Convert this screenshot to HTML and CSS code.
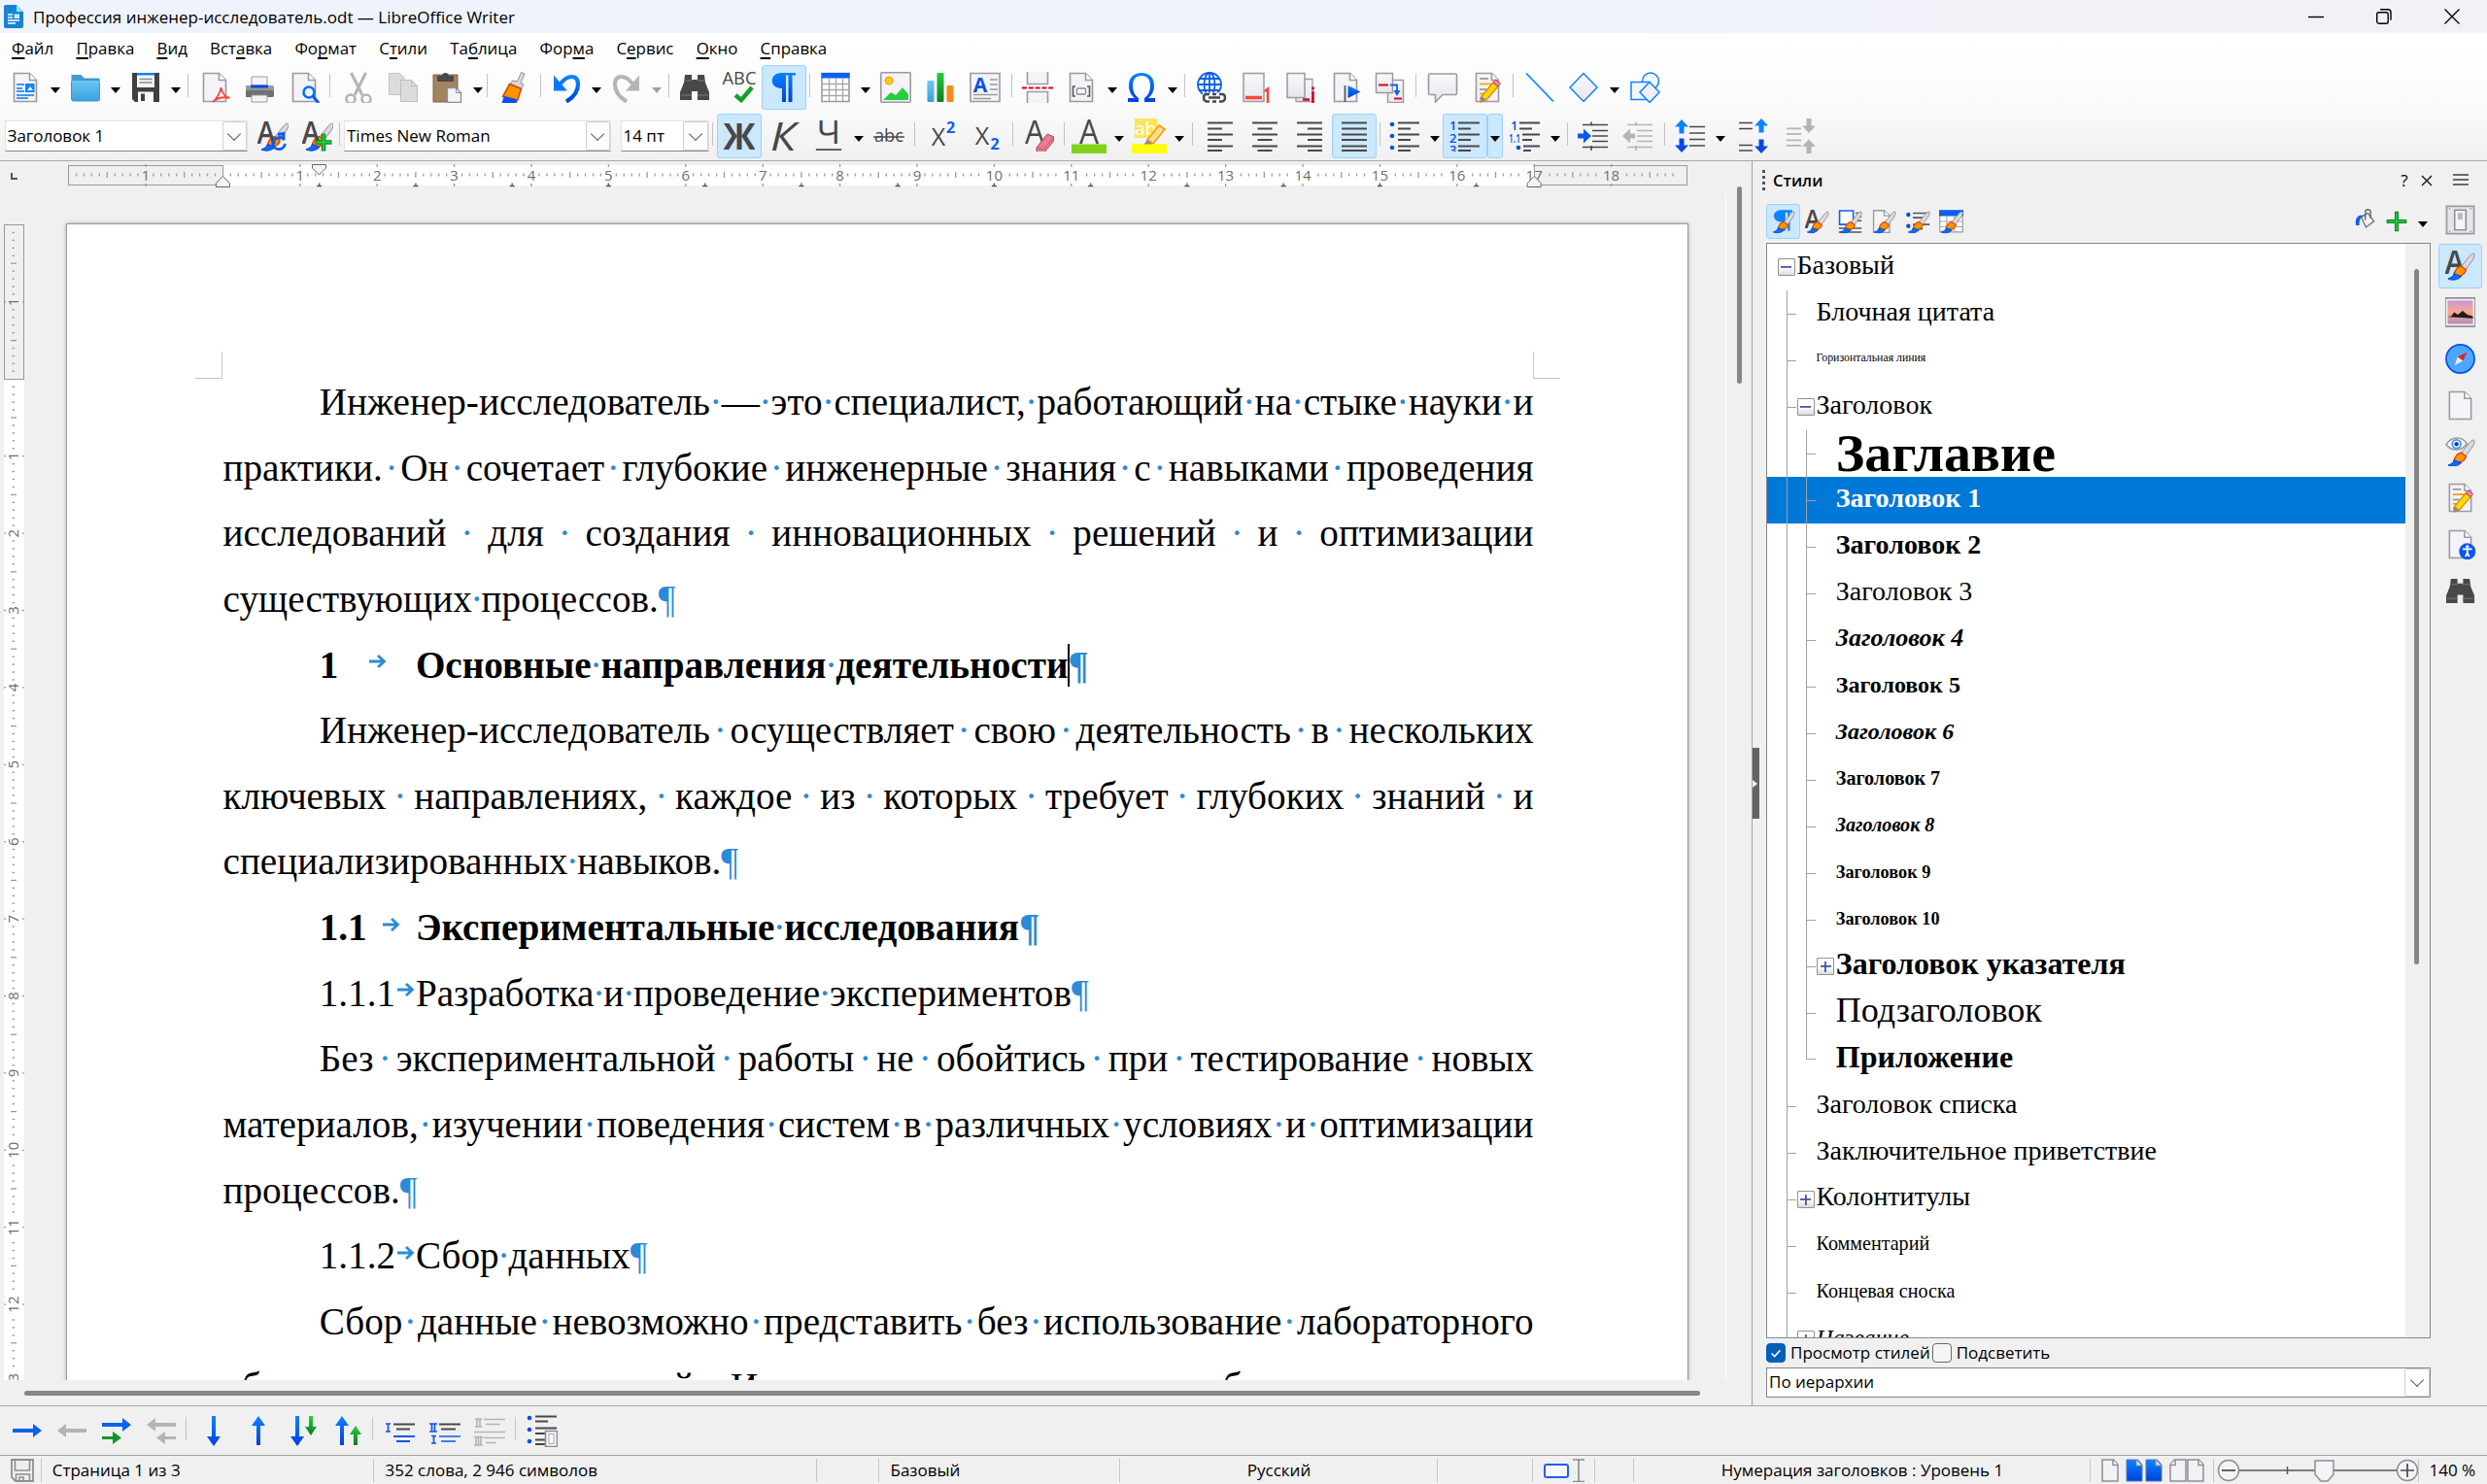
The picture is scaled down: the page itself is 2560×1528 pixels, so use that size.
FILE: index.html
```html
<!DOCTYPE html>
<html lang="ru">
<head>
<meta charset="utf-8">
<title>Профессия инженер-исследователь.odt — LibreOffice Writer</title>
<link rel="stylesheet" href="styles.css">
</head>
<body>
<svg class="defs" aria-hidden="true">
  <defs>
    <linearGradient id="blue" x1="0" y1="0" x2="0" y2="1"><stop offset="0" stop-color="#0a84ff"/><stop offset="1" stop-color="#0040dd"/></linearGradient>
    <linearGradient id="green" x1="0" y1="0" x2="0" y2="1"><stop offset="0" stop-color="#28cd41"/><stop offset="1" stop-color="#0a7d1c"/></linearGradient>
    <linearGradient id="sky" x1="0" y1="0" x2="0" y2="1"><stop offset="0" stop-color="#6cc8f5"/><stop offset="1" stop-color="#3aa0dc"/></linearGradient>
    <linearGradient id="paper" x1="0" y1="0" x2="0" y2="1"><stop offset="0" stop-color="#f8f7fc"/><stop offset="1" stop-color="#e8e8ec"/></linearGradient>
    <linearGradient id="dusk" x1="0" y1="0" x2="0" y2="1"><stop offset="0" stop-color="#c79ad2"/><stop offset=".5" stop-color="#fba98c"/><stop offset="1" stop-color="#b48cc0"/></linearGradient>
  </defs>
</svg>
<svg class="symbols" aria-hidden="true">
  <symbol id="doc" viewBox="0 0 32 32"><path d="M4.5 1.5h16l7 7v22h-23z" fill="#f4f3f8" stroke="#9a9a9f" stroke-width="1.6"/><path d="M20.500 1.500v7h7" fill="#fff" stroke="#9a9a9f" stroke-width="1.600"/></symbol>
  <symbol id="brush" viewBox="0 0 32 32"><path d="M30.500 3.500c1 1 .5 3-1 6l-8 11-4.500-3.500 8-10c2-2.500 4-4.500 5.500-3.500z" fill="#d9d9de" stroke="#88888c"/><path d="M17 16.500c-5 1-7 5-8 10h8c4-2 5-4 5-6z" fill="#ff9500" stroke="#d8480a" stroke-width="1.500"/><path d="M9.500 24.500c-1 3-3 4-6.500 5.500 4 2 10 1.500 14-2.500z" fill="#0a6cff" stroke="#0040c8"/></symbol>
  <symbol id="pencil" viewBox="0 0 32 32"><path d="M9 31l1-6L22 11l5 4-12 14z" fill="#ffd60a" stroke="#e08700" stroke-width="1.300"/><path d="M9 31l1-6 5 4z" fill="#8a8a8e"/><path d="M22 11l2.500-3 5 4-2.500 3z" fill="#f08ca0" stroke="#b8405c"/></symbol>
  <symbol id="i-new" viewBox="0 0 32 32"><use href="#doc"/><path d="M7 13h8M7 17h6M7 20h8M7 24h18M7 27h12" stroke="#0a78f5" stroke-width="1.700"/><path d="M16 12h9.500v9H16z" fill="#0a84ff"/><path d="M18 19l3-4 3 4z" fill="#fff"/></symbol>
  <symbol id="i-open" viewBox="0 0 32 32"><path d="M1.500 3h10l3 3.500h16V14h-29z" fill="#4499cc"/><rect x="1.500" y="8.500" width="29" height="21.500" rx="2" fill="url(#sky)" stroke="#3a98d0"/></symbol>
  <symbol id="i-save" viewBox="0 0 32 32"><path d="M2 1h28v30H5l-3-3z" fill="#404042"/><path d="M7 2h18v14H7z" fill="#f5f5f7"/><path d="M7 1h18v2.500H7z" fill="#0a84ff"/><path d="M9.500 7.500h13M9.500 11h13" stroke="#8a8a90" stroke-width="1.500"/><path d="M8 20.500h16V31H8z" fill="#fafafa"/><path d="M11 22.500h4V30h-4z" fill="#404042"/></symbol>
  <symbol id="i-pdf" viewBox="0 0 32 32"><path d="M2.500 1.500h16l7 7v22h-23z" fill="#f4f3f8" stroke="#9a9a9f" stroke-width="1.600"/><path d="M18.500 1.500v7h7" fill="#fff" stroke="#9a9a9f" stroke-width="1.600"/><path d="M12 31c4-3 8-10 8.500-15 .5 5 4 10 9 11-6-1.500-12-1-17.500 4z" fill="#fff" stroke="#ff453a" stroke-width="1.800"/></symbol>
  <symbol id="i-print" viewBox="0 0 32 32"><path d="M6 5h16v9H6z" fill="#f4f3f8" stroke="#9a9a9f"/><rect x="-1" y="14" width="30" height="12" rx="2" fill="#97979c"/><rect x="-1" y="19" width="30" height="7" rx="2" fill="#707074"/><path d="M5 13.500h18v3H5z" fill="#0a48e0"/><path d="M6 24h16v7H6z" fill="#f4f3f8" stroke="#9a9a9f"/></symbol>
  <symbol id="i-preview" viewBox="0 0 32 32"><path d="M2.500 1.500h16l7 7v22h-23z" fill="#f4f3f8" stroke="#9a9a9f" stroke-width="1.600"/><path d="M18.500 1.500v7h7" fill="#fff" stroke="#9a9a9f" stroke-width="1.600"/><circle cx="19" cy="21" r="5.500" fill="#eaf4ff" stroke="#0a6cff" stroke-width="2.600"/><path d="M23 25l6 7" stroke="#0a5cf0" stroke-width="3"/></symbol>
  <symbol id="i-cut" viewBox="0 0 32 32"><g fill="none" stroke="#b4b4b6"><path d="M8.500 1L20 24M23.500 1L12 24" stroke-width="3"/><circle cx="8" cy="28" r="4.500" stroke-width="2.600"/><circle cx="24" cy="28" r="4.500" stroke-width="2.600"/></g></symbol>
  <symbol id="i-copy" viewBox="0 0 32 32"><path d="M1.500 1.500h11l5 5v17h-16z" fill="#dcdcde" stroke="#c4c4c6"/><path d="M13.500 8.500h11l6 6v16h-17z" fill="#dcdcde" stroke="#bdbdc0"/><path d="M24.500 8.500v6h6" fill="none" stroke="#bdbdc0"/></symbol>
  <symbol id="i-paste" viewBox="0 0 32 32"><path d="M1 3h25v28H1z" fill="#a2845e" stroke="#7d6444"/><path d="M5 4h5c0-4 7-4 7 0h5v6H5z" fill="#48484a"/><path d="M15.500 16.500h9l5 5v10h-14z" fill="#f4f3f8" stroke="#8e8e93" stroke-width="1.300"/><path d="M24.500 16.500v5h5" fill="none" stroke="#8e8e93"/></symbol>
  <symbol id="i-clone" viewBox="0 0 32 32"><path d="M23.500 0.500l3.500 1.500-4 9.500 3 1.500-2.500 4-11-4.500 2-3.500 5 1z" fill="#d9d9de" stroke="#8e8e93"/><path d="M11.500 12.500l12 5-4 12-15-4z" fill="#ff9500" stroke="#d8480a" stroke-width="1.600"/><path d="M6 25l12.500 3 .5 4H3.500z" fill="#0a50e8"/></symbol>
  <symbol id="i-undo" viewBox="0 0 32 32"><path d="M3 3.500v16h14z" fill="#0a78fa"/><path d="M10 12C18 2 28 3 28 13c0 8-6 14-12 17.500" fill="none" stroke="url(#blue)" stroke-width="4.200"/></symbol>
  <symbol id="i-redo" viewBox="0 0 32 32"><path d="M29 3.500v16H15z" fill="#b4b4b6"/><path d="M22 12C14 2 4 3 4 13c0 8 6 14 12 17.500" fill="none" stroke="#b4b4b6" stroke-width="4.200"/></symbol>
  <symbol id="i-find" viewBox="0 0 32 32"><path d="M6 3h7v5h6V3h7l1 8 4 10v8H19v-9h-6v9H1v-8l4-10z" fill="#48484a"/><path d="M5 9h9M18 9h9M2 24h11M19 24h11" stroke="#78787a"/></symbol>
  <symbol id="i-spell" viewBox="0 0 36 32"><text x="18" y="13" text-anchor="middle" textLength="35" lengthAdjust="spacingAndGlyphs" font-size="18" fill="#48484a" class="ui">ABC</text><path d="M14 24l6 5L31 16" fill="none" stroke="#14a02c" stroke-width="4.500"/></symbol>
  <symbol id="i-pilcrow" viewBox="0 0 32 32"><path d="M28 1v2.500h-3.500V31h-4V3.500h-2.500V31h-4V17C0 17 1 1 13 1z" fill="url(#blue)"/></symbol>
  <symbol id="i-table" viewBox="0 0 32 32"><path d="M2 1.500h28v29H2z" fill="#fff" stroke="#9a9a9f" stroke-width="1.600"/><path d="M1.500 1h29v5.500h-29z" fill="#0a60ee"/><path d="M2 12.500h28M2 18.500h28M2 24.500h28M9.500 6v24M16.500 6v24M23.500 6v24" stroke="#a8a8ac" stroke-width="1.300"/></symbol>
  <symbol id="i-image" viewBox="0 0 32 32"><rect x=".8" y=".8" width="30.400" height="30.400" rx="1" fill="#f4f3f8" stroke="#9a9a9f" stroke-width="1.600"/><circle cx="9" cy="9" r="4" fill="#ffcc00" stroke="#ff9500"/><path d="M3 29l8-8 5 3 7-8 6 7v6z" fill="#28cd41"/></symbol>
  <symbol id="i-chart" viewBox="0 0 32 32"><rect x="2.500" y="9" width="7" height="22" rx="1" fill="url(#sky)"/><rect x="12.500" y="1" width="7" height="30" rx="1" fill="url(#green)"/><rect x="22.500" y="14" width="7" height="17" rx="1" fill="#f58a1f"/></symbol>
  <symbol id="i-textbox" viewBox="0 0 32 32"><path d="M1 1.500h30v29H1z" fill="#f4f3f8" stroke="#9a9a9f" stroke-width="1.600"/><path d="M21 8h8M21 13h8M21 18h8M4 23.500h25M4 27.500h18" stroke="#9a9a9f" stroke-width="1.400"/><text x="11" y="20.500" text-anchor="middle" font-size="21" font-weight="bold" fill="#0a50e8" class="ui">A</text></symbol>
  <symbol id="i-break" viewBox="0 0 32 32"><path d="M5.500 0v12.500h21V0M5.500 32V20.500h21V32" fill="#f4f3f8" stroke="#9a9a9f" stroke-width="1.600"/><path d="M0 16.500h32" stroke="#e00020" stroke-width="2" stroke-dasharray="5 1.800"/></symbol>
  <symbol id="i-field" viewBox="0 0 32 32"><path d="M3.500 1.500h16l7 7v22h-23z" fill="#f4f3f8" stroke="#9a9a9f" stroke-width="1.600"/><path d="M19.500 1.500v7h7" fill="#fff" stroke="#9a9a9f" stroke-width="1.600"/><path d="M9 15H6.500v10H9M21 15h2.500v10H21" fill="none" stroke="#58585a" stroke-width="1.600"/><rect x="10.500" y="17" width="9" height="6" rx="1" fill="#fff" stroke="#8a8a8e" stroke-width="1.300"/></symbol>
  <symbol id="i-omega" viewBox="0 0 32 32"><path d="M1 31v-4h7C3 23 2 18 2 14 2 6 7 1 15 1s13 5 13 13c0 4-1 9-6 13h7v4H18v-4c4-3 6-7 6-13 0-6-3-10-9-10S6 8 6 14c0 6 2 10 6 13v4z" fill="url(#blue)"/></symbol>
  <symbol id="i-link" viewBox="0 0 32 32"><g fill="none" stroke="#0a60e8" stroke-width="1.800"><ellipse cx="14" cy="13" rx="12" ry="12"/><ellipse cx="14" cy="13" rx="5.500" ry="12"/><path d="M14 1v24M2 13h24M4 7h20M4 19h20"/></g><path d="M7 21.500h24v10H7z" fill="#fafafa"/><g fill="none" stroke="#48484a" stroke-width="2.400"><path d="M14 23h-3q-3 0-3 3.500t3 4h3M24 23h3q3 0 3 3.500t-3 4h-3M13 26.500h12M17 23h4M17 30.500h4"/></g></symbol>
  <symbol id="i-foot" viewBox="0 0 32 32"><path d="M3 1.500h21v29H3z" fill="url(#paper)" stroke="#9a9a9f" stroke-width="1.500"/><path d="M5 26.500h17" stroke="#ff453a" stroke-width="3.500"/><path d="M25 20l3-2.500V32" fill="none" stroke="#ff453a" stroke-width="2.600"/></symbol>
  <symbol id="i-end" viewBox="0 0 32 32"><path d="M11 7.500h17v23H11z" fill="url(#paper)" stroke="#9a9a9f" stroke-width="1.300"/><path d="M2 1.500h18v25H2z" fill="url(#paper)" stroke="#9a9a9f" stroke-width="1.500"/><path d="M18 28.500h7M28.500 20v12M28.500 15.500v3" stroke="#d8001c" stroke-width="2.600"/></symbol>
  <symbol id="i-mark" viewBox="0 0 32 32"><use href="#doc"/><path d="M15.500 14v17" stroke="#58585a" stroke-width="1.800"/><path d="M18.500 14l13 6.500-13 6.500z" fill="url(#blue)"/></symbol>
  <symbol id="i-xref" viewBox="0 0 32 32"><path d="M13.500 8.500h16v23h-16z" fill="url(#paper)" stroke="#9a9a9f" stroke-width="1.500"/><path d="M1.500 1.500h17v20h-17z" fill="url(#paper)" stroke="#9a9a9f" stroke-width="1.500"/><path d="M4 13.500h10M20 27.500h8" stroke="#e00020" stroke-width="2"/><path d="M16 13.500h7v7" fill="none" stroke="#0a60ee" stroke-width="1.800"/><path d="M19.500 19h7l-3.500 6z" fill="#0a60ee"/></symbol>
  <symbol id="i-comment" viewBox="0 0 32 32"><path d="M3 2h26q1.500 0 1.500 1.500V22q0 1.500-1.500 1.500H16l-7.500 7.500v-7.500H3q-1.500 0-1.500-1.500V3.500Q1.500 2 3 2z" fill="url(#paper)" stroke="#9a9a9f" stroke-width="1.600"/></symbol>
  <symbol id="i-track" viewBox="0 0 32 32"><use href="#doc"/><path d="M8 7h9M8 18h7M8 27h3" stroke="#8a8a8e" stroke-width="1.500"/><path d="M8 12.500h14M8 22.500h9" stroke="#ff9500" stroke-width="1.700"/><use href="#pencil"/></symbol>
  <symbol id="i-line" viewBox="0 0 32 32"><path d="M2 1.500l28 29" stroke="#0a84ff" stroke-width="1.700"/></symbol>
  <symbol id="i-diamond" viewBox="0 0 32 32"><path d="M15 1.500L29 16 15 30.500 1 16z" fill="url(#paper)" stroke="#0a84ff" stroke-width="1.500"/></symbol>
  <symbol id="i-shapes" viewBox="0 0 32 32"><g fill="#f4f3f8" stroke="#0a84ff" stroke-width="1.500"><circle cx="22" cy="9.500" r="8.500"/><path d="M2 10.500h19v18H2z"/><path d="M21 10.500L31 21 21 31.500 11 21z" fill="#f0f0f4"/></g></symbol>
  <symbol id="i-restyle" viewBox="0 0 32 32"><use href="#brush" x="1"/><text x="9" y="23.500" text-anchor="middle" font-size="33" font-weight="600" textLength="19" lengthAdjust="spacingAndGlyphs" fill="#48484a" class="ui">A</text><path d="M27 19c-3-3-11-1-11 5 0 7 11 8 12.500 0M21 14.500l6-1v7" fill="none" stroke="#0a5cf0" stroke-width="2.800"/></symbol>
  <symbol id="i-newstyle" viewBox="0 0 32 32"><use href="#brush" x="1"/><text x="9" y="23.500" text-anchor="middle" font-size="33" font-weight="600" textLength="19" lengthAdjust="spacingAndGlyphs" fill="#48484a" class="ui">A</text><path d="M22 13.500v18M13.500 22.500h17" stroke="#0a8c20" stroke-width="4.500"/><path d="M22 14.500v16M14.500 22.500h15" stroke="#28cd41" stroke-width="1.800"/></symbol>
  <symbol id="i-bold" viewBox="0 0 32 32"><text x="16" y="29.500" text-anchor="middle" font-size="37" font-weight="bold" textLength="33" lengthAdjust="spacingAndGlyphs" fill="#48484a" class="ui">Ж</text></symbol>
  <symbol id="i-italic" viewBox="0 0 32 32"><text x="15" y="30.500" text-anchor="middle" font-size="41" font-style="italic" textLength="26" lengthAdjust="spacingAndGlyphs" fill="#48484a" class="ui">К</text></symbol>
  <symbol id="i-under" viewBox="0 0 32 34"><text x="16" y="26" text-anchor="middle" font-size="36" font-weight="500" textLength="26" lengthAdjust="spacingAndGlyphs" fill="#48484a" class="ui">Ч</text><path d="M2 32h28" stroke="#48484a" stroke-width="1.800"/></symbol>
  <symbol id="i-strike" viewBox="0 0 32 32"><text x="16" y="22" text-anchor="middle" font-size="18" textLength="30" lengthAdjust="spacingAndGlyphs" fill="#48484a" class="ui">abc</text><path d="M0 17h32" stroke="#48484a" stroke-width="1.500"/></symbol>
  <symbol id="i-super" viewBox="0 0 32 32"><text x="13" y="25.500" text-anchor="middle" font-size="25" font-weight="500" fill="#48484a" class="ui">X</text><text x="25.500" y="13" text-anchor="middle" font-size="16" font-weight="bold" fill="#0a60ee" class="ui">2</text></symbol>
  <symbol id="i-sub" viewBox="0 0 32 32"><text x="12" y="25" text-anchor="middle" font-size="25" font-weight="500" fill="#48484a" class="ui">X</text><text x="25" y="30" text-anchor="middle" font-size="16" font-weight="bold" fill="#0a60ee" class="ui">2</text></symbol>
  <symbol id="i-clear" viewBox="0 0 32 32"><text x="12" y="24" text-anchor="middle" font-size="34" textLength="20" lengthAdjust="spacingAndGlyphs" fill="#48484a" class="ui">A</text><path d="M14 28L25 14l7 3-1 5-10 12-7-2z" fill="#ee7a90" stroke="#a84860"/><path d="M14 28l7 2 11-13" fill="none" stroke="#c45870"/></symbol>
  <symbol id="i-color" viewBox="0 0 36 36"><text x="18" y="26" text-anchor="middle" font-size="35" textLength="20" lengthAdjust="spacingAndGlyphs" fill="#48484a" class="ui">A</text><path d="M0 26.500h36v9.500H0z" fill="#81d41a"/></symbol>
  <symbol id="i-high" viewBox="0 0 36 36"><path d="M3 0h23v20H3z" fill="#ffe45c"/><text x="14" y="17" text-anchor="middle" font-size="19" fill="#fff" class="ui">ab</text><path d="M16 22L28 7l6 4-12 15z" fill="#ffe08a" stroke="#ff9500" stroke-width="1.600"/><path d="M12 27l4-5 5 4-1 1z" fill="#8e8e93"/><path d="M0 26.500h36v9.500H0z" fill="#ff0"/></symbol>
  <symbol id="i-left" viewBox="0 0 32 32"><path d="M3 2.500h26M3 8.500h15M3 14.500h26M3 20h15M3 26.500h26M3 31h15" stroke="#48484a" stroke-width="1.900"/></symbol>
  <symbol id="i-center" viewBox="0 0 32 32"><path d="M3 2.500h26M8.500 8.500h15M3 14.500h26M8.500 20h15M3 26.500h26M8.500 31h15" stroke="#48484a" stroke-width="1.900"/></symbol>
  <symbol id="i-right" viewBox="0 0 32 32"><path d="M3 2.500h26M14 8.500h15M3 14.500h26M14 20h15M3 26.500h26M14 31h15" stroke="#48484a" stroke-width="1.900"/></symbol>
  <symbol id="i-justify" viewBox="0 0 32 32"><path d="M3 2.500h26M3 8.500h26M3 14.500h26M3 20h26M3 26.500h26M3 31h26" stroke="#48484a" stroke-width="1.900"/></symbol>
  <symbol id="i-bullets" viewBox="0 0 32 32"><g fill="#0a50e0"><circle cx="3" cy="4" r="2.300"/><circle cx="3" cy="16" r="2.300"/><circle cx="3" cy="28" r="2.300"/></g><path d="M9 2.500h22M9 8.500h13M9 14.500h22M9 20h13M9 26.500h22M9 31h13" stroke="#48484a" stroke-width="1.900"/></symbol>
  <symbol id="i-numbers" viewBox="0 0 32 32"><g font-size="13" font-weight="600" fill="#0a50e0" class="ui"><text x="0" y="10">1</text><text x="0" y="22.500">2</text><text x="0" y="35">3</text></g><path d="M9 2.500h22M9 8.500h13M9 14.500h22M9 20h13M9 26.500h22M9 31h13" stroke="#48484a" stroke-width="1.900"/></symbol>
  <symbol id="i-outline" viewBox="0 0 32 32"><g font-size="13" font-weight="600" fill="#0a50e0" class="ui"><text x="1" y="10">1</text><text x="-1" y="22.500" textLength="12" lengthAdjust="spacingAndGlyphs">1.1</text></g><circle cx="9" cy="28" r="2.300" fill="#0a50e0"/><path d="M10 2.500h21M10 8.500h13M13 14.500h18M13 20h10M14 26.500h17M14 31h8" stroke="#48484a" stroke-width="1.900"/></symbol>
  <symbol id="i-indent" viewBox="0 0 32 32"><path d="M5 4.500h26M15 10.500h16M15 16h16M15 21.500h16M5 27.500h26M14 1.500v4M14 26v5" stroke="#48484a" stroke-width="1.600"/><path d="M0 13.500h6v-5l8 7.500-8 7.500v-5H0z" fill="#0a58ea"/></symbol>
  <symbol id="i-outdent" viewBox="0 0 32 32"><path d="M5 4.500h26M15 10.500h16M15 16h16M15 21.500h16M5 27.500h26M14 1.500v4M14 26v5" stroke="#b4b4b6" stroke-width="1.600"/><path d="M13 13.500H8v-5L0 16l8 7.500v-5h5z" fill="#b4b4b6"/></symbol>
  <symbol id="i-spacing" viewBox="0 0 32 34"><path d="M7 0l7 7.500H9.500v7h-5v-7H0z" fill="#0a84ff"/><path d="M7 34l7-7.500H9.500v-7h-5v7H0z" fill="#0a48e0"/><path d="M15 7.500h16M15 14h16M15 20.500h16M15 27h16" stroke="#48484a" stroke-width="1.700"/></symbol>
  <symbol id="i-more" viewBox="0 0 32 36"><path d="M2 4.500h14M2 10.500h14M2 27.500h14M2 33h14" stroke="#48484a" stroke-width="1.700"/><path d="M25 0l7 7.500h-4.500v7h-5v-7H18z" fill="#0a84ff"/><path d="M25 36l7-7.500h-4.500v-7h-5v7H18z" fill="#0a48e0"/></symbol>
  <symbol id="i-less" viewBox="0 0 32 36"><g fill="#b4b4b6"><path d="M3 9.500h15v1.700H3zM3 15h15v1.700H3zM3 21.500h15v1.700H3zM3 27h15v1.700H3z"/><path d="M26 15l7-7.500h-4.500v-7.500h-5v7.500H19zM26 21.500l7 7.500h-4.500v7h-5v-7H19z"/></g></symbol>
  <symbol id="b-right" viewBox="0 0 32 32"><path d="M1 14h21V9l9 7-9 7v-5H1z" fill="#0a62f0"/></symbol>
  <symbol id="b-left" viewBox="0 0 32 32"><path d="M31 14H10V9l-9 7 9 7v-5h21z" fill="#b4b4b6"/></symbol>
  <symbol id="b-right2" viewBox="0 0 32 32"><path d="M1 8h21V3l9 7-9 7v-5H1z" fill="#0a62f0"/><path d="M1 22h11v-5l9 6.500-9 6.500v-5H1z" fill="#12962a"/></symbol>
  <symbol id="b-left2" viewBox="0 0 32 32"><path d="M31 8H10V3l-9 7 9 7v-5h21zM31 22H20v-5l-9 6.500 9 6.500v-5h11z" fill="#b4b4b6"/></symbol>
  <symbol id="b-down" viewBox="0 0 32 32"><path d="M14 1h4v21h5l-7 10-7-10h5z" fill="url(#blue)"/></symbol>
  <symbol id="b-up" viewBox="0 0 32 32"><path d="M14 31h4V11h5L16 1 9 11h5z" fill="url(#blue)"/></symbol>
  <symbol id="b-down2" viewBox="0 0 32 32"><path d="M8 1h4v21h5l-7 10-7-10h5z" fill="url(#blue)"/><path d="M22 1h4v11h4l-6 9-6-9h4z" fill="url(#green)"/></symbol>
  <symbol id="b-up2" viewBox="0 0 32 32"><path d="M8 31h4V11h5L10 1 3 11h5z" fill="url(#blue)"/><path d="M22 31h4V20h4l-6-9-6 9h4z" fill="url(#green)"/></symbol>
  <symbol id="b-l1" viewBox="0 0 32 32"><path d="M9 9.500h22M12 14.500h14" stroke="#48484a" stroke-width="1.800"/><path d="M9 22h22M12 27h14" stroke="#0a58ea" stroke-width="1.800"/><path d="M1 9h5M1 17h5M3.500 9v8" stroke="#0a58ea" stroke-width="1.700"/></symbol>
  <symbol id="b-l2" viewBox="0 0 32 32"><path d="M10 9.500h22M12 14.500h15" stroke="#48484a" stroke-width="1.800"/><path d="M10 22h22M12 27h15M0 9h8M0 17h8M2.500 9v8M5.500 9v8M2 21.500h5M2 29h5M4.500 21.500V29" stroke="#0a58ea" stroke-width="1.700"/></symbol>
  <symbol id="b-l3" viewBox="0 0 32 32"><path d="M10 4.500h22M12 9.500h15M0 17.500h32M10 23.500h22M12 28.500h11M1 4h7M1 12h7M3 4v8M6 4v8M0 22.500h9M0 31h9M2 22.500V31M4.500 22.500V31M7 22.500V31" stroke="#b4b4b6" stroke-width="1.600"/></symbol>
  <symbol id="b-props" viewBox="0 0 32 34"><g fill="#0a50e0"><circle cx="3" cy="4" r="2.300"/><circle cx="3" cy="16" r="2.300"/><circle cx="3" cy="28" r="2.300"/></g><path d="M9 2.500h22M9 7.500h13M9 14.500h22M9 26.500h10M9 20h10M9 31h10" stroke="#48484a" stroke-width="1.900"/><path d="M19.500 17.500h12v16h-12z" fill="#f4f3f8" stroke="#8e8e93" stroke-width="1.600"/><path d="M23 20.500h5v10h-5z" fill="#fff" stroke="#a8a8ac"/></symbol>
  <symbol id="s-char" viewBox="0 0 32 32"><text x="10" y="25" text-anchor="middle" font-size="35" font-weight="600" textLength="21" lengthAdjust="spacingAndGlyphs" fill="#48484a" class="ui">A</text><use href="#brush"/></symbol>
  <symbol id="s-para" viewBox="0 0 32 32"><path d="M28 1v3h-3V28h-3V4h-3V28h-4V17C0 17 1 1 13 1z" fill="#0a84ff"/><use href="#brush"/></symbol>
  <symbol id="s-frame" viewBox="0 0 32 32"><path d="M2 2h18v18H2z" fill="#fff" stroke="#0a60e8" stroke-width="2"/><path d="M23 5h8M23 10h8M23 15h8M1 25h30M1 30h30" stroke="#58585a" stroke-width="1.800"/><use href="#brush"/></symbol>
  <symbol id="s-page" viewBox="0 0 32 32"><path d="M2 1.500h14l7 7v22H2z" fill="#f4f3f8" stroke="#9a9a9f" stroke-width="1.800"/><path d="M16 1.500v7h7" fill="#fff" stroke="#9a9a9f" stroke-width="1.800"/><use href="#brush"/></symbol>
  <symbol id="s-list" viewBox="0 0 32 32"><g fill="#0a50e0"><circle cx="3" cy="7" r="2.800"/><circle cx="3" cy="22" r="2.800"/></g><path d="M9 5h22M9 11h13M9 20h22M9 26h13" stroke="#58585a" stroke-width="2"/><use href="#brush"/></symbol>
  <symbol id="s-table" viewBox="0 0 32 32"><path d="M1 2h30v28H1z" fill="#fff" stroke="#9a9a9f" stroke-width="1.500"/><path d="M0 1h32v8H0z" fill="#0a60ee"/><path d="M1 16h30M1 23h30M10 9v21M20 9v21" stroke="#a8a8ac" stroke-width="1.500"/><use href="#brush"/></symbol>
  <symbol id="s-fill" viewBox="0 0 32 32"><path d="M11 14l10-6 9 12-12 9z" fill="#f4f3f8" stroke="#77777c" stroke-width="2"/><path d="M17 18V7c0-6 8-6 8 0v9" fill="none" stroke="#66666a" stroke-width="2"/><path d="M3 26c-2-12 4-16 12-15-5 3-7 7-7 15z" fill="#0a60ee"/></symbol>
  <symbol id="s-plus" viewBox="0 0 32 32"><path d="M16 1v30M1 16h30" stroke="#0a8c20" stroke-width="6"/><path d="M16 3v26M3 16h26" stroke="#28cd41" stroke-width="2.500"/></symbol>
  <symbol id="t-props" viewBox="0 0 32 32"><path d="M1.500 1.500h29v29h-29z" fill="#e6e6ea" stroke="#9a9a9f" stroke-width="1.800"/><path d="M10 5.500h12v21H10z" fill="#f4f3f8" stroke="#8e8e93" stroke-width="1.600"/><path d="M13.500 8.500h5v7h-5z" fill="#b8b8bc"/><path d="M4 4h1.500M26.500 4H28M4 28h1.500M26.500 28H28" stroke="#8e8e93" stroke-width="1.500"/></symbol>
  <symbol id="t-gallery" viewBox="0 0 32 32"><path d="M0 1h32v30H0z" fill="#f4f3f8" stroke="#8e8e93" stroke-width="1.800"/><path d="M2.500 3.500h27v25h-27z" fill="url(#dusk)"/><path d="M2.500 21l4-1 3-4 4 2.500 5-4 5 4 6 2v2z" fill="#1d1d1f"/></symbol>
  <symbol id="t-nav" viewBox="0 0 32 32"><circle cx="16" cy="16" r="15" fill="#4aa8ff" stroke="#0a50e8" stroke-width="1.800"/><path d="M23 9l-4 9-6-4z" fill="#e8202c"/><path d="M10 23l3-9 6 4z" fill="#e8e8ec"/></symbol>
  <symbol id="t-inspect" viewBox="0 0 32 32"><path d="M1 9c6-9 17-9 22-1-5 8-16 9-22 1z" fill="#f4f3f8" stroke="#9a9a9f" stroke-width="1.600"/><circle cx="12" cy="8.500" r="4.500" fill="#fff" stroke="#4a90ff" stroke-width="1.800"/><circle cx="12" cy="8.500" r="2.300" fill="#0040c8"/><use href="#brush" y="1"/></symbol>
  <symbol id="t-access" viewBox="0 0 32 32"><use href="#doc"/><circle cx="23.500" cy="23.500" r="8.800" fill="#0a58ea"/><circle cx="23.500" cy="18.500" r="1.700" fill="#fff"/><path d="M18.500 21h10M23.500 21v4l-2 4M23.500 25l2 4" fill="none" stroke="#fff" stroke-width="1.800"/></symbol>
  <symbol id="page" viewBox="0 0 18 24"><path d="M1 1h11.500l4.500 5v17H1z" fill="#f2f2f6" stroke="#8e8e93" stroke-width="1.500"/><path d="M12 1v5.500h5" fill="#fff" stroke="#8e8e93" stroke-width="1.500"/></symbol>
  <symbol id="page-on" viewBox="0 0 18 24"><path d="M1 1h11.500l4.500 5v17H1z" fill="url(#blue)" stroke="#5a78b0"/><path d="M11 1v6h6z" fill="#d8dce8" stroke="#8e8e93"/></symbol>
</svg>

<header class="titlebar">
  <svg class="app" viewBox="0 0 20 24"><path d="M2 0h11l7 7v15q0 2-2 2H2q-2 0-2-2V2q0-2 2-2z" fill="#1783d4"/><path d="M13 0l7 7h-7z" fill="#8fe3f7"/><path d="M4 10h5M4 13h5M4 16h12M4 19h8" stroke="#fff" stroke-width="1.500"/><path d="M10.500 9.500H16V14h-5.500z" fill="#bdeeff"/></svg>
  <h1>Профессия инженер-исследователь.odt — LibreOffice Writer</h1>
  <div class="winbtns">
    <svg viewBox="0 0 16 16"><path d="M0 8.500h16" /></svg>
    <svg viewBox="0 0 16 16"><rect x=".7" y="3.700" width="11.500" height="11.500" rx="2"/><path d="M4 .8h8q3 0 3 3v8"/></svg>
    <svg viewBox="0 0 16 16"><path d="M.5.5l15 15M15.500.5l-15 15"/></svg>
  </div>
</header>

<div class="bars">
  <nav class="menu"><span><u>Ф</u>айл</span><span><u>П</u>равка</span><span><u>В</u>ид</span><span>Вст<u>а</u>вка</span><span>Фо<u>р</u>мат</span><span>С<u>т</u>или</span><span>Та<u>б</u>лица</span><span>Фор<u>м</u>а</span><span>С<u>е</u>рвис</span><span><u>О</u>кно</span><span><u>С</u>правка</span></nav>

  <div class="toolbar standard">
    <div class="group"><b class="btn"><svg><use href="#i-new"/></svg></b><b class="drop"></b><b class="btn"><svg><use href="#i-open"/></svg></b><b class="drop"></b><b class="btn"><svg><use href="#i-save"/></svg></b><b class="drop"></b></div>
    <div class="group"><b class="btn"><svg><use href="#i-pdf"/></svg></b><b class="btn"><svg><use href="#i-print"/></svg></b><b class="btn"><svg><use href="#i-preview"/></svg></b></div>
    <div class="group"><b class="btn"><svg><use href="#i-cut"/></svg></b><b class="btn"><svg><use href="#i-copy"/></svg></b><b class="btn"><svg><use href="#i-paste"/></svg></b><b class="drop"></b></div>
    <div class="group"><b class="btn"><svg><use href="#i-clone"/></svg></b></div>
    <div class="group"><b class="btn"><svg><use href="#i-undo"/></svg></b><b class="drop"></b><b class="btn"><svg><use href="#i-redo"/></svg></b><b class="drop off"></b></div>
    <div class="group"><b class="btn"><svg><use href="#i-find"/></svg></b><b class="btn"><svg class="wide"><use href="#i-spell"/></svg></b><b class="btn on"><svg><use href="#i-pilcrow"/></svg></b></div>
    <div class="group"><b class="btn"><svg><use href="#i-table"/></svg></b><b class="drop"></b><b class="btn"><svg><use href="#i-image"/></svg></b><b class="btn"><svg><use href="#i-chart"/></svg></b><b class="btn"><svg><use href="#i-textbox"/></svg></b></div>
    <div class="group"><b class="btn"><svg><use href="#i-break"/></svg></b><b class="btn"><svg><use href="#i-field"/></svg></b><b class="drop"></b><b class="btn"><svg><use href="#i-omega"/></svg></b><b class="drop"></b></div>
    <div class="group"><b class="btn"><svg><use href="#i-link"/></svg></b><b class="btn"><svg><use href="#i-foot"/></svg></b><b class="btn"><svg><use href="#i-end"/></svg></b><b class="btn"><svg><use href="#i-mark"/></svg></b><b class="btn"><svg><use href="#i-xref"/></svg></b></div>
    <div class="group"><b class="btn"><svg><use href="#i-comment"/></svg></b><b class="btn"><svg><use href="#i-track"/></svg></b></div>
    <div class="group"><b class="btn"><svg><use href="#i-line"/></svg></b><b class="btn"><svg><use href="#i-diamond"/></svg></b><b class="drop"></b><b class="btn"><svg><use href="#i-shapes"/></svg></b></div>
  </div>

  <div class="toolbar format">
    <div class="group"><div class="combo style"><span>Заголовок 1</span><i></i></div><b class="btn"><svg><use href="#i-restyle"/></svg></b><b class="btn"><svg><use href="#i-newstyle"/></svg></b></div>
    <div class="group"><div class="combo font"><span>Times New Roman</span><i></i></div><div class="combo size"><span>14 пт</span><i></i></div></div>
    <div class="group"><b class="btn on"><svg><use href="#i-bold"/></svg></b><b class="btn"><svg><use href="#i-italic"/></svg></b><b class="btn"><svg><use href="#i-under"/></svg></b><b class="drop"></b><b class="btn"><svg><use href="#i-strike"/></svg></b></div>
    <div class="group"><b class="btn"><svg><use href="#i-super"/></svg></b><b class="btn"><svg><use href="#i-sub"/></svg></b></div>
    <div class="group"><b class="btn"><svg><use href="#i-clear"/></svg></b></div>
    <div class="group"><b class="btn"><svg class="big"><use href="#i-color"/></svg></b><b class="drop"></b><b class="btn"><svg class="big"><use href="#i-high"/></svg></b><b class="drop"></b></div>
    <div class="group"><b class="btn"><svg><use href="#i-left"/></svg></b><b class="btn"><svg><use href="#i-center"/></svg></b><b class="btn"><svg><use href="#i-right"/></svg></b><b class="btn on"><svg><use href="#i-justify"/></svg></b></div>
    <div class="group"><b class="btn"><svg><use href="#i-bullets"/></svg></b><b class="drop"></b><b class="btn on"><svg><use href="#i-numbers"/></svg></b><b class="drop on"></b><b class="btn"><svg><use href="#i-outline"/></svg></b><b class="drop"></b></div>
    <div class="group"><b class="btn"><svg><use href="#i-indent"/></svg></b><b class="btn"><svg><use href="#i-outdent"/></svg></b></div>
    <div class="group"><b class="btn"><svg class="tall"><use href="#i-spacing"/></svg></b><b class="drop"></b><b class="btn wider"><svg class="taller"><use href="#i-more"/></svg></b><b class="btn"><svg class="taller"><use href="#i-less"/></svg></b></div>
  </div>
</div>

<main class="body">
  <section class="editor">
    <svg class="hruler" id="hruler" width="1777" height="34"></svg>
    <div class="view">
      <svg class="vruler" id="vruler" width="29" height="1221"></svg>
      <div class="canvas">
        <article class="page">
          <i class="corner tl"></i><i class="corner tr"></i>
          <p class="fill first">Инженер-исследователь — это специалист, работающий на стыке науки и</p>
          <p class="fill">практики. Он сочетает глубокие инженерные знания с навыками проведения</p>
          <p class="fill">исследований для создания инновационных решений и оптимизации</p>
          <p class="end">существующих процессов.</p>
          <p class="end head" data-num="1" data-caret="1">Основные направления деятельности</p>
          <p class="fill first">Инженер-исследователь осуществляет свою деятельность в нескольких</p>
          <p class="fill">ключевых направлениях, каждое из которых требует глубоких знаний и</p>
          <p class="end">специализированных навыков.</p>
          <p class="end head" data-num="1.1">Экспериментальные исследования</p>
          <p class="end" data-num="1.1.1">Разработка и проведение экспериментов</p>
          <p class="fill first">Без экспериментальной работы не обойтись при тестирование новых</p>
          <p class="fill">материалов, изучении поведения систем в различных условиях и оптимизации</p>
          <p class="end">процессов.</p>
          <p class="end" data-num="1.1.2">Сбор данных</p>
          <p class="fill first">Сбор данные невозможно представить без использование лабораторного</p>
          <p class="fill">оборудования и измерений. Исследователь регулярно собирает материалы</p>
        </article>
      </div>
    </div>
    <div class="hscroll"><i></i></div>
  </section>
  <div class="vscroll"><i></i></div>

  <aside class="sidebar">
    <div class="handle"></div>
    <div class="deck">
      <div class="deck-title"><i class="grip"></i><strong>Стили</strong><span>?</span><svg viewBox="0 0 12 12"><path d="M1 1l10 10M11 1L1 11"/></svg></div>
      <div class="deck-tools">
        <b class="on"><svg><use href="#s-para"/></svg></b><b><svg><use href="#s-char"/></svg></b><b><svg><use href="#s-frame"/></svg></b><b><svg><use href="#s-page"/></svg></b><b><svg><use href="#s-list"/></svg></b><b><svg><use href="#s-table"/></svg></b>
        <div class="actions"><svg class="fill-ico"><use href="#s-fill"/></svg><svg><use href="#s-plus"/></svg><b class="drop"></b></div>
      </div>
      <div class="tree">
        <ul>
          <li class="l0"><i class="box"></i><span class="s28">Базовый</span></li>
          <li class="l1"><i class="g stub"></i><i class="nobox"></i><span class="s28">Блочная цитата</span></li>
          <li class="l1"><i class="g stub"></i><i class="nobox"></i><span class="s12">Горизонтальная линия</span></li>
          <li class="l1"><i class="g stub"></i><i class="box"></i><span class="s28">Заголовок</span></li>
          <li class="l2"><i class="g"></i><i class="g stub"></i><i class="nobox"></i><span class="s56 bold">Заглавие</span></li>
          <li class="l2 sel"><i class="g"></i><i class="g stub"></i><i class="nobox"></i><span class="s28 bold">Заголовок 1</span></li>
          <li class="l2"><i class="g"></i><i class="g stub"></i><i class="nobox"></i><span class="s28 bold">Заголовок 2</span></li>
          <li class="l2"><i class="g"></i><i class="g stub"></i><i class="nobox"></i><span class="s28">Заголовок 3</span></li>
          <li class="l2"><i class="g"></i><i class="g stub"></i><i class="nobox"></i><span class="s26 bold ital">Заголовок 4</span></li>
          <li class="l2"><i class="g"></i><i class="g stub"></i><i class="nobox"></i><span class="s24 bold">Заголовок 5</span></li>
          <li class="l2"><i class="g"></i><i class="g stub"></i><i class="nobox"></i><span class="s24 bold ital">Заголовок 6</span></li>
          <li class="l2"><i class="g"></i><i class="g stub"></i><i class="nobox"></i><span class="s20 bold">Заголовок 7</span></li>
          <li class="l2"><i class="g"></i><i class="g stub"></i><i class="nobox"></i><span class="s20 bold ital">Заголовок 8</span></li>
          <li class="l2"><i class="g"></i><i class="g stub"></i><i class="nobox"></i><span class="s18 bold">Заголовок 9</span></li>
          <li class="l2"><i class="g"></i><i class="g stub"></i><i class="nobox"></i><span class="s18 bold">Заголовок 10</span></li>
          <li class="l2"><i class="g"></i><i class="g stub"></i><i class="box plus"></i><span class="s32 bold">Заголовок указателя</span></li>
          <li class="l2"><i class="g"></i><i class="g stub"></i><i class="nobox"></i><span class="s36">Подзаголовок</span></li>
          <li class="l2"><i class="g"></i><i class="g stub last"></i><i class="nobox"></i><span class="s32 bold">Приложение</span></li>
          <li class="l1"><i class="g stub"></i><i class="nobox"></i><span class="s28">Заголовок списка</span></li>
          <li class="l1"><i class="g stub"></i><i class="nobox"></i><span class="s28">Заключительное приветствие</span></li>
          <li class="l1"><i class="g stub"></i><i class="box plus"></i><span class="s28 high">Колонтитулы</span></li>
          <li class="l1"><i class="g stub"></i><i class="nobox"></i><span class="s20 high">Комментарий</span></li>
          <li class="l1"><i class="g stub"></i><i class="nobox"></i><span class="s20">Концевая сноска</span></li>
          <li class="l1"><i class="g stub"></i><i class="box plus"></i><span class="s24 ital">Название</span></li>
        </ul>
        <div class="track"><i></i></div>
      </div>
      <div class="checks"><i class="check checked"><svg viewBox="0 0 20 20"><path d="M5 10.500l3.500 3.500L15 7"/></svg></i><span>Просмотр стилей</span><i class="check"></i><span>Подсветить</span></div>
      <div class="combo filter"><span>По иерархии</span><i></i></div>
    </div>
    <div class="tabs">
      <b class="burger"><svg viewBox="0 0 18 14"><path d="M1 2h16M1 7h16M1 12h16" stroke="#3c3c3c" stroke-width="1.500"/></svg></b>
      <b><svg><use href="#t-props"/></svg></b><b class="on"><svg><use href="#s-char"/></svg></b><b><svg><use href="#t-gallery"/></svg></b><b><svg><use href="#t-nav"/></svg></b><b><svg><use href="#doc"/></svg></b><b><svg><use href="#t-inspect"/></svg></b><b><svg><use href="#i-track"/></svg></b><b><svg><use href="#t-access"/></svg></b><b><svg><use href="#i-find"/></svg></b>
    </div>
  </aside>
</main>

<div class="toolbar outline">
  <div class="group"><b class="btn"><svg><use href="#b-right"/></svg></b><b class="btn"><svg><use href="#b-left"/></svg></b><b class="btn"><svg><use href="#b-right2"/></svg></b><b class="btn"><svg><use href="#b-left2"/></svg></b></div>
  <div class="group"><b class="btn"><svg><use href="#b-down"/></svg></b><b class="btn"><svg><use href="#b-up"/></svg></b><b class="btn"><svg><use href="#b-down2"/></svg></b><b class="btn"><svg><use href="#b-up2"/></svg></b></div>
  <div class="group"><b class="btn"><svg><use href="#b-l1"/></svg></b><b class="btn"><svg><use href="#b-l2"/></svg></b><b class="btn"><svg><use href="#b-l3"/></svg></b></div>
  <div class="group"><b class="btn"><svg class="tall"><use href="#b-props"/></svg></b></div>
</div>

<footer class="status">
  <div class="st-save"><svg viewBox="0 0 24 24" width="24" height="24"><path d="M1 1h22v22H5l-4-4z" fill="#f0f0f0" stroke="#8e8e93" stroke-width="1.800"/><path d="M4.500 1v11h15V1M5.500 23v-7h14v7M9 23v-4h4v4" fill="none" stroke="#8e8e93" stroke-width="1.600"/></svg></div>
  <div>Страница 1 из 3</div>
  <div>352 слова, 2 946 символов</div>
  <div></div>
  <div>Базовый</div>
  <div class="mid">Русский</div>
  <div></div>
  <div class="st-sel"><svg viewBox="0 0 44 24" width="44" height="24"><rect x="1" y="6" width="24" height="13" rx="2" fill="#f6f8ff" stroke="#2a5ce8" stroke-width="2"/><path d="M30 1h12M30 23.500h12M36 1v22" stroke="#8a8a8e" stroke-width="1.600"/></svg></div>
  <div></div>
  <div class="mid">Нумерация заголовков : Уровень 1</div>
  <div class="st-view"><svg class="pg"><use href="#page"/></svg><svg class="pg two"><use href="#page-on"/></svg><svg class="pg"><use href="#page-on"/></svg><svg class="pg two mirror"><use href="#page"/></svg><svg class="pg flip"><use href="#page"/></svg></div>
  <div class="st-zoom"><svg viewBox="0 0 208 26" width="208" height="26"><path d="M14 13h178" stroke="#58585a" stroke-width="1.600"/><path d="M73.500 9v8" stroke="#58585a" stroke-width="1.500"/><circle cx="13" cy="13" r="10.500" fill="#f4f4f8" stroke="#8e8e93" stroke-width="1.500"/><path d="M6 13h14" stroke="#48484a" stroke-width="1.700"/><circle cx="197" cy="13" r="10.500" fill="#f4f4f8" stroke="#8e8e93" stroke-width="1.500"/><path d="M190 13h14M197 6v14" stroke="#48484a" stroke-width="1.700"/><path d="M102 3h19v14l-6 7h-7l-6-7z" fill="#f4f4f8" stroke="#8e8e93" stroke-width="1.500"/></svg></div>
  <div class="st-pct">140 %</div>
</footer>
<script src="app.js"></script>
</body>
</html>
```

FILE: styles.css
```css
* { box-sizing: border-box; }
html, body { margin: 0; }
body {
  width: 2560px; height: 1528px; overflow: hidden;
  display: grid; grid-template-rows: 34px 132px 1281px 52px 29px;
  background: #f0f0f0; color: #000;
  font: 17px/22px "Open Sans", "Noto Sans", sans-serif;
}
.defs { position: absolute; width: 0; height: 0; }
.symbols { display: none; }
.ui { font-family: "Open Sans", "Noto Sans", sans-serif; }
i, b { font-style: normal; font-weight: normal; }

/* title bar */
.titlebar { display: flex; align-items: center; background: linear-gradient(90deg, #eff3fb 60%, #f0f2f7 85%); padding: 0 28px 0 4px; }
.titlebar .app { width: 20px; height: 24px; margin-right: 10px; }
.titlebar h1 { margin: 0; font: inherit; padding-top: 1px; }
.winbtns { margin-left: auto; display: flex; gap: 54px; }
.winbtns svg { width: 16px; height: 16px; fill: none; stroke: #000; stroke-width: 1.4; }

/* menu and toolbars */
.bars { background: linear-gradient(#fff, #fafafa 60%, #f0f0f0); border-bottom: 1px solid #a9a9a9; display: grid; grid-template-rows: 32px 47px 52px; }
.menu { display: flex; gap: 23.2px; padding-left: 12px; align-items: center; font-size: 16.900px; }
.menu u { text-underline-offset: 3px; text-decoration-thickness: 1.5px; text-decoration-skip-ink: none; }
.toolbar { display: grid; }
.standard { grid-template-columns: 193px 146px 162px 54.5px 132px 145px 208px 178px 238px 100px auto; }
.format { grid-template-columns: 349px 384px 208px 100.5px 53px 132px 193px 193.500px 100px auto; padding-top: 2px; }
.outline { grid-template-columns: 191px 192px 146.500px auto; border-top: 1px solid #a9a9a9; border-bottom: 1px solid #a0a0a0; }
.group { display: flex; align-items: center; padding-left: 4.5px; position: relative; }
.group + .group::before { content: ""; position: absolute; left: 0; top: 50%; height: 24px; margin-top: -14px; width: 1px; background: #c3c3c3; }
.group:first-child { padding-left: 2.5px; }
.outline .group { padding-left: 5.500px; }
.outline .group:first-child { padding-left: 4.5px; }
.standard .group:nth-child(2), .standard .group:nth-child(3) { padding-left: 7px; }
.standard .group:nth-child(n+9) { padding-left: 5px; }
.standard .group:nth-child(6) { padding-left: 4px; }
.btn { flex: none; width: 46px; height: 46px; display: grid; place-items: center; }
.btn svg { width: 32px; height: 32px; overflow: visible; }
.btn svg.wide { width: 36px; }
.btn svg.big { width: 36px; height: 36px; }
.btn svg.tall { height: 34px; }
.btn svg.taller { height: 36px; }
.btn.wider { width: 50px; }
.on { background: #cce8ff; border: 1px solid #99d1ff; border-radius: 3px; }
.drop { flex: none; width: 16px; height: 46px; display: grid; place-items: center; }
.drop::after { content: ""; border: 5.5px solid transparent; border-top: 6.5px solid #000; border-bottom: 0; margin-top: 6px; }
.drop.off::after { border-top-color: #a0a0a0; }
.format .group:nth-child(1) { padding-left: 4.500px; }
.format .group:nth-child(2) { gap: 9.500px; padding-left: 5px; }
.format .group:nth-child(6), .format .group:nth-child(8), .format .group:nth-child(9), .format .group:nth-child(10) { padding-left: 3.500px; }
.format .group:nth-child(7) { padding-left: 6px; }

.combo { display: flex; flex: none; height: 32px; background: #fff; border: 1px solid #e2e2e2; border-bottom: 1.500px solid #868686; align-items: center; padding-left: 2px; }
.combo span { flex: 1; }
.combo i { width: 25.500px; height: 30px; border: 1px solid #d0d0d0; border-radius: 2px; display: grid; place-items: center; background: #fdfdfd; }
.combo i::after { content: ""; width: 9px; height: 9px; border: solid #5c5c5c; border-width: 0 1.400px 1.400px 0; transform: translateY(-2px) rotate(45deg); }
.combo.style { width: 250.500px; margin-right: 3px; }
.combo.font { width: 275px; }
.combo.size { width: 91px; }

/* editor */
.body { display: grid; grid-template-columns: 1777px 26px 757px; min-height: 0; }
.editor { display: grid; grid-template-rows: 34px 1221px 26px; min-height: 0; }
.hruler, .vruler { display: block; }
.hruler text, .vruler text { font: 15px "Open Sans", "Noto Sans", sans-serif; fill: #6e6e6e; }
.view { display: flex; overflow: hidden; border-right: 1px solid #fff; }
.canvas { flex: 1; padding: 30px 0 0 39px; }
.page { position: relative; width: 1669.500px; height: 2300px; background: #fff; border: 1px solid #9b9b9b; box-shadow: 0 0 4px rgba(0,0,0,.3); padding: 149px 158px 0 160.500px; font: 39.200px/67.640px "Liberation Serif", serif; }
.page p { margin: 0; height: 67.640px; display: flex; white-space: pre; }
.page p.first, .page p[data-num] { padding-left: 99.200px; }
.page .num { display: flex; width: 99.200px; margin-right: 0; }
.page .tab { flex: 1; display: grid; place-items: center; }
.page .tab svg { width: 18px; height: 16px; margin: -6px -1px 0 0; flex: none; }
.page .dot { color: #2a8bd6; width: 9.800px; display: flex; justify-content: center; }
.page p.fill .dot { flex: 1 1 0; width: 0; }
.page .mark { color: #2a8bd6; }
.page .head { font-weight: bold; }
.page .head .dot { font-weight: normal; }
.page .caret { width: 1.500px; height: 44px; margin: 12px -1.500px 0 0; background: #000; }
.corner { position: absolute; top: 131px; width: 28px; height: 28px; border-bottom: 1px solid #c0c0c0; }
.corner.tl { left: 132px; border-right: 1px solid #c8c8c8; }
.corner.tr { left: 1509px; border-left: 1px solid #c8c8c8; }
.hscroll { padding: 11px 0 0 25px; }
.hscroll i { display: block; width: 1725px; height: 5px; border-radius: 2.500px; background: #868686; }
.vscroll { padding: 26px 0 0 11px; }
.vscroll i { display: block; width: 5px; height: 203px; border-radius: 2.500px; background: #868686; }

/* sidebar */
.sidebar { border-left: 1px solid #a0a0a0; display: grid; grid-template-columns: 14px 683.500px 1fr; }
.handle { align-self: start; margin-top: 604px; width: 6.500px; height: 73px; background: #636363; display: grid; align-items: center; }
.handle::after { content: ""; border: 4px solid transparent; border-left: 5px solid #f0f0f0; border-right: 0; }
.deck { display: grid; grid-template-rows: 40px 44px 1127.500px 30px 31px; }
.deck-title { display: flex; align-items: center; }
.grip { width: 3px; height: 22px; margin: 0 8px 0 -4px; background: repeating-linear-gradient(#555 0 2.500px, transparent 2.500px 6px); }
.deck-title strong { font-weight: 600; flex: 1; font-size: 16.500px; }
.deck-title span { margin-right: 13px; }
.deck-title svg { width: 12px; height: 12px; margin-right: -2px; stroke: #222; stroke-width: 1.500; }
.deck-tools { display: flex; align-items: start; padding-top: 4px; }
.deck-tools > b { width: 34.700px; height: 36px; display: grid; place-items: center; }
.deck-tools > b svg { width: 25px; height: 26px; overflow: visible; }
.actions { margin-left: auto; display: flex; align-items: center; height: 36px; gap: 11px; }
.actions svg { width: 22px; height: 22px; }
.actions .fill-ico { margin-top: -6px; }
.actions .drop { margin-left: -3px; height: 36px; }
.tree { border: 1px solid #82868f; background: #fff; display: flex; overflow: hidden; }
.tree ul { flex: 1; margin: 0; padding: 0; list-style: none; }
.tree li { height: 48px; display: flex; align-items: center; font-family: "Liberation Serif", serif; white-space: nowrap; }
.tree li span { line-height: 1; padding-bottom: 4px; }
.l0 { padding-left: 11px; }
.l1, .l2 { padding-left: 20px; }
.g { width: 20.300px; height: 48px; border-left: 1px solid #a0a0a0; display: flex; align-items: center; }
.g.stub::after { content: ""; width: 9px; height: 1px; background: #a0a0a0; }
.g.stub { width: 11px; }
.g.last { height: 24px; align-self: start; align-items: end; }
.nobox { width: 19.500px; }
.box { width: 17.500px; height: 17.500px; margin-right: 2px; border: 1px solid #919191; border-radius: 1px; background: linear-gradient(90deg, #4257a0, #4257a0) center / 11px 1.800px no-repeat, linear-gradient(#fff 50%, #dcdcdc); }
.box.plus { background: linear-gradient(#4257a0, #4257a0) center / 11px 1.800px no-repeat, linear-gradient(#4257a0, #4257a0) center / 1.800px 11px no-repeat, linear-gradient(#fff 50%, #dcdcdc); }
.sel { background: #0078d7; color: #fff; }
.bold { font-weight: bold; }
.ital { font-style: italic; }
.s12 { font-size: 11.800px; } .s18 { font-size: 18.300px; } .s20 { font-size: 20.100px; } .s24 { font-size: 24px; }
.s26 { font-size: 26px; } .s28 { font-size: 28px; } .s32 { font-size: 32px; } .s36 { font-size: 36.100px; } .s56 { font-size: 55.800px; }
.tree li .s18, .tree li .s56 { padding-bottom: 1px; }
.tree li .s20 { padding-bottom: 3px; }
.tree li .s32, .tree li .s36, .tree li .high { padding-bottom: 6px; }
.track { width: 25px; background: #f0f0f0; padding: 26px 0 0 9.500px; }
.track i { display: block; width: 5px; height: 716px; border-radius: 2.500px; background: #868686; }
.checks { display: flex; align-items: center; }
.check { width: 20px; height: 20px; border: 1.300px solid #6a6a6a; border-radius: 4px; background: #f5f5f5; margin-right: 5px; }
.checks span + .check { margin-left: 2px; }
.check.checked { background: #005fb8; border-color: #005fb8; }
.check svg { display: block; width: 100%; fill: none; stroke: #fff; stroke-width: 1.600; }
.combo.filter { border: 1px solid #82868f; height: 31px; align-self: start; }
.combo.filter i { height: 29px; }
.tabs { display: flex; flex-direction: column; align-items: center; padding-left: 4px; }
.tabs b { width: 45px; height: 46px; margin-bottom: 1.800px; display: grid; place-items: center; }
.tabs b svg { width: 31px; height: 31px; overflow: visible; }
.tabs .burger { height: 34px; margin: 2px 0 1px; }
.tabs .burger svg { width: 18px; height: 14px; }

/* status bar */
.status { display: grid; grid-template-columns: 41.700px 342.800px 456px 64px 248px 327px 98px 64px 40px 470px 127px 211px 1fr; align-items: center; }
.status > div { height: 24px; border-left: 1px solid #c6c6c6; padding: 1px 0 0 11px; display: flex; align-items: center; white-space: nowrap; }
.status > div:first-child { border-left: 0; }
.status > .mid { justify-content: center; padding: 1px 0 0; }
.status > .st-pct { padding-left: 10px; }
.status > .st-zoom { padding-left: 2px; }
.pg { width: 18px; height: 24px; margin-right: 7px; flex: none; }
.pg.two { margin-right: 1.500px; }
.pg.mirror { transform: scaleX(-1); margin-right: 0; }
.pg.flip { margin: 0; }
```

FILE: app.js
```js
const CM = 79.4;
const line = (x1, y1, x2, y2, c = '#9a9a9a') =>
  `<path d="M${x1} ${y1}L${x2} ${y2}" stroke="${c}" stroke-width="1.3"/>`;

// Horizontal ruler: margins, millimetre ticks, default tab stops and indent markers
function horizontal() {
  const x0 = 229.4, x1 = x0 + 17 * CM;
  let s = '<rect x="229" y="4" width="1350" height="21" fill="#fff"/>';
  s += '<rect x="70.500" y="4.500" width="159" height="20" fill="#f0f0f0" stroke="#9a9a9a"/>';
  s += '<rect x="1579.500" y="4.500" width="157" height="20" fill="#f0f0f0" stroke="#9a9a9a"/>';
  s += '<path d="M12 12v6h6" fill="none" stroke="#555" stroke-width="2"/>';
  for (let n = -19; n < 190; n++) {
    const x = x0 + n * CM / 10;
    if (n % 10 === 0) {
      if (n === 0) continue;
      s += line(x, 3, x, 6) + line(x, 23, x, 26);
      if (n !== 170) s += `<text x="${x}" y="19.5" text-anchor="middle">${Math.abs(n / 10)}</text>`;
      else s += `<text x="${x}" y="19.5" text-anchor="middle">17</text>`;
    } else if (n % 5 === 0) s += line(x, 11, x, 17);
    else if (!(n > 95 && (n % 10 === 1 || n % 10 === 9))) s += line(x, 12.5, x, 15.5);
  }
  for (let t = 1; t < 14; t++) {
    const x = x0 + t * 1.25 * CM;
    if (t * 1.25 < 17) s += `<path d="M${x - 2.5} 25.5h5M${x} 22.5v3" stroke="#555" stroke-width="1.3"/>`;
  }
  const up = x => `<path d="M${x} 15.500l7 7v4h-14v-4z" fill="#f4f4f4" stroke="#666"/>`;
  s += up(x0) + up(x1);
  s += `<path d="M321.500 3.500h14v3.500l-7 7-7-7z" fill="#f4f4f4" stroke="#666"/>`;
  document.getElementById('hruler').innerHTML = s;
}

// Vertical ruler, zero at the top text margin
function vertical() {
  const y0 = 190.3;
  let s = '<rect x="4" y="190" width="21" height="1031" fill="#fff"/>';
  s += '<rect x="4.500" y="31.500" width="20" height="159" fill="#f0f0f0" stroke="#9a9a9a"/>';
  for (let n = -19; n < 131; n++) {
    const y = y0 + n * CM / 10;
    if (n % 10 === 0) {
      if (n === 0) continue;
      s += line(4, y, 6, y) + line(23, y, 25, y);
      s += `<text x="14" y="${y}" text-anchor="middle" transform="rotate(-90 14 ${y})" dy="5">${Math.abs(n / 10)}</text>`;
    } else if (n % 5 === 0) s += line(11, y, 17, y);
    else if (!(n > 95 && (n % 10 === 1 || n % 10 === 9))) s += line(12.5, y, 15, y);
  }
  document.getElementById('vruler').innerHTML = s;
}

// Formatting marks: space dots, tab arrows and paragraph ends
function marks() {
  document.querySelectorAll('.page p').forEach(p => {
    const words = p.textContent.split(' ');
    let h = words.map(w => `<span>${w}</span>`).join('<span class="dot">·</span>');
    if (p.dataset.num) {
      h = `<span class="num">${p.dataset.num}<span class="tab"><svg viewBox="0 0 18 16"><path d="M0 8h14M9 2l6.500 6L9 14" fill="none" stroke="#2a8bd6" stroke-width="2.800"/></svg></span></span>` + h;
    }
    if (p.dataset.caret) h += '<i class="caret"></i>';
    if (p.classList.contains('end')) h += '<span class="mark">¶</span>';
    p.innerHTML = h;
  });
}

horizontal();
vertical();
marks();
```
